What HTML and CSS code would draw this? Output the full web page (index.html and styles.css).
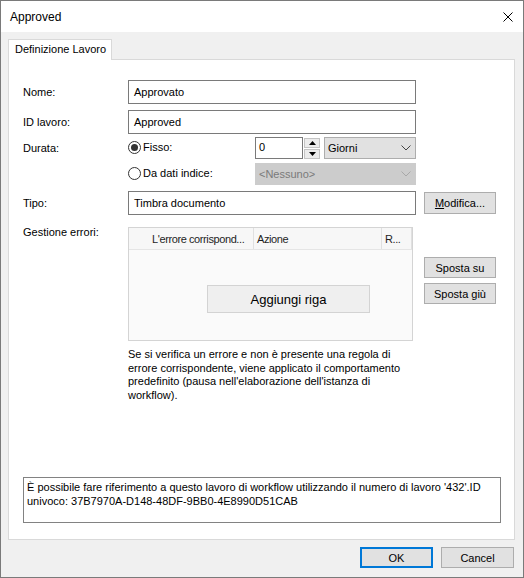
FILE: index.html
```html
<!DOCTYPE html>
<html>
<head>
<meta charset="utf-8">
<link rel="stylesheet" href="styles.css">
</head>
<body>
<div class="window">
  <div class="titlebar">
    <span class="title">Approved</span>
    <svg class="close" width="10" height="10" viewBox="0 0 10 10"><path d="M0.5 0.5 L9.5 9.5 M9.5 0.5 L0.5 9.5" stroke="#000" stroke-width="1" fill="none"/></svg>
  </div>
  <div class="client">
    <div class="tabs"><div class="tab">Definizione Lavoro</div></div>
    <div class="panel">
      <div class="row row-first">
        <div class="label">Nome:</div>
        <div class="input field">Approvato</div>
      </div>
      <div class="row row-gap6">
        <div class="label">ID lavoro:</div>
        <div class="input field">Approved</div>
      </div>
      <div class="row row-durata">
        <div class="label">Durata:</div>
        <div class="radio-group"><span class="radio checked"></span><span>Fisso:</span></div>
        <div class="spin-input">0</div>
        <div class="spin">
          <div class="spin-btn"><svg width="7" height="4" viewBox="0 0 7 4"><path d="M0 4 L3.5 0 L7 4 Z" fill="#000"/></svg></div>
          <div class="spin-btn"><svg width="7" height="4" viewBox="0 0 7 4"><path d="M0 0 L3.5 4 L7 0 Z" fill="#000"/></svg></div>
        </div>
        <div class="combo combo-giorni"><span>Giorni</span><svg width="10" height="6" viewBox="0 0 10 6"><path d="M0.5 0.5 L5 5 L9.5 0.5" stroke="#444" fill="none"/></svg></div>
      </div>
      <div class="row row-dati">
        <div class="label"></div>
        <div class="radio-group"><span class="radio"></span><span>Da dati indice:</span></div>
        <div class="combo combo-disabled"><span>&lt;Nessuno&gt;</span><svg width="10" height="6" viewBox="0 0 10 6"><path d="M0.5 0.5 L5 5 L9.5 0.5" stroke="#a8a8a8" fill="none"/></svg></div>
      </div>
      <div class="row row-gap6">
        <div class="label">Tipo:</div>
        <div class="input field">Timbra documento</div>
        <button class="btn btn-side btn-mod"><u>M</u>odifica...</button>
      </div>
      <div class="row row-errors">
        <div class="label label-top">Gestione errori:</div>
        <div class="list">
          <div class="list-head">
            <div class="col col1">L'errore corrispond...</div>
            <div class="col col2">Azione</div>
            <div class="col col3">R...</div>
          </div>
          <div class="list-body">
            <button class="add-row">Aggiungi riga</button>
          </div>
        </div>
        <div class="side-buttons">
          <button class="btn btn-side">Sposta su</button>
          <button class="btn btn-side">Sposta giù</button>
        </div>
      </div>
      <p class="note">Se si verifica un errore e non è presente una regola di errore corrispondente, viene applicato il comportamento predefinito (pausa nell'elaborazione dell'istanza di workflow).</p>
      <div class="info">È possibile fare riferimento a questo lavoro di workflow utilizzando il numero di lavoro '432'.ID univoco: 37B7970A-D148-48DF-9BB0-4E8990D51CAB</div>
    </div>
    <div class="footer">
      <button class="btn btn-foot btn-default">OK</button>
      <button class="btn btn-foot">Cancel</button>
    </div>
  </div>
</div>
</body>
</html>
```

FILE: styles.css
```css
* { box-sizing: border-box; }
body {
  margin: 0;
  font-family: "Liberation Sans", Arial, sans-serif;
  font-size: 11px;
  color: #000;
}
.window {
  width: 524px;
  height: 578px;
  border: 1px solid #7a7a7a;
  background: #f0f0f0;
  display: flex;
  flex-direction: column;
}
.titlebar {
  height: 31px;
  flex: none;
  background: #fff;
  display: flex;
  align-items: center;
  justify-content: space-between;
  padding: 0 10px 0 9px;
}
.title { font-size: 12px; }
.close { display: block; }
.client {
  flex: 1;
  display: flex;
  flex-direction: column;
  padding: 7px 8px 0 7px;
}
.tabs { display: flex; }
.tab {
  width: 104px;
  height: 21px;
  border: 1px solid #d9d9d9;
  border-bottom: none;
  background: #fff;
  margin-bottom: -1px;
  position: relative;
  z-index: 1;
  padding-left: 6px;
  line-height: 19px;
}
.panel {
  height: 481px;
  border: 1px solid #d9d9d9;
  background: #fff;
  display: flex;
  flex-direction: column;
  padding: 20px 0 16px 14px;
}
.row { display: flex; align-items: center; }
.row-gap6 { margin-top: 6px; }
.row-durata { margin-top: 3px; height: 22px; }
.row-dati { margin-top: 4px; height: 22px; }
.row-errors { margin-top: 12px; align-items: flex-start; }
.label { width: 105px; flex: none; }
.label-top { line-height: 11px; }
.input {
  height: 24px;
  border: 1px solid #7a7a7a;
  padding-left: 5px;
  display: flex;
  align-items: center;
  background: #fff;
}
.field { width: 288px; }
.radio-group {
  width: 127px;
  display: flex;
  align-items: center;
  gap: 2px;
  margin-top: -2px;
}
.radio {
  width: 13px;
  height: 13px;
  border: 1px solid #333;
  border-radius: 50%;
  display: flex;
  align-items: center;
  justify-content: center;
}
.radio.checked::after {
  content: "";
  width: 7px;
  height: 7px;
  border-radius: 50%;
  background: #333;
}
.spin-input {
  width: 48px;
  height: 22px;
  border: 1px solid #7a7a7a;
  padding: 0 0 2px 3px;
  display: flex;
  align-items: center;
}
.spin {
  margin-left: 1px;
  display: flex;
  flex-direction: column;
  gap: 1px;
}
.spin-btn {
  width: 16px;
  height: 10px;
  background: #ececec;
  border: 1px solid #c4c4c4;
  display: flex;
  align-items: center;
  justify-content: center;
}
.spin-btn svg { display: block; }
.combo {
  height: 22px;
  display: flex;
  align-items: center;
  justify-content: space-between;
  padding: 0 4px 0 3px;
  border: 1px solid #adadad;
  background: #e1e1e1;
}
.combo svg { display: block; }
.combo-giorni { width: 92px; margin-left: 4px; }
.combo-disabled {
  width: 161px;
  background: #cccccc;
  border-color: #cccccc;
  color: #7a7a7a;
}
.btn {
  font-family: "Liberation Sans", Arial, sans-serif;
  font-size: 11px;
  color: #000;
  background: #e1e1e1;
  border: 1px solid #adadad;
  padding: 0;
  margin: 0;
}
.btn-side { width: 72px; height: 21px; }
.btn-mod { margin-left: 8px; height: 22px; }
.list {
  width: 285px;
  height: 114px;
  border: 1px solid #d4d4d4;
  background: #fafafa;
  display: flex;
  flex-direction: column;
}
.list-head {
  height: 22px;
  display: flex;
  border-bottom: 1px solid #e5e5e5;
  background: #f7f7f7;
  color: #1e1e1e;
  letter-spacing: -0.4px;
}
.col {
  display: flex;
  align-items: center;
  border-right: 1px solid #e0e0e0;
  white-space: nowrap;
  overflow: hidden;
}
.col1 { width: 125px; padding-left: 23px; }
.col2 { width: 128px; padding-left: 3px; }
.col3 { width: 30px; padding-left: 3px; }
.list-body {
  flex: 1;
  padding: 35px 0 0 78px;
}
.add-row {
  width: 163px;
  height: 28px;
  background: #efefef;
  border: 1px solid #d3d3d3;
  font-family: "Liberation Sans", Arial, sans-serif;
  font-size: 13px;
  color: #000;
  padding: 0;
}
.side-buttons {
  margin-left: 11px;
  padding-top: 30px;
  display: flex;
  flex-direction: column;
  gap: 5px;
}
.note {
  margin: 7px 0 0 105px;
  width: 290px;
  line-height: 13.5px;
}
.info {
  margin-top: auto;
  width: 478px;
  height: 46px;
  border: 1px solid #828282;
  padding: 2px 3px;
  line-height: 14px;
}
.footer {
  margin-top: 7px;
  display: flex;
  justify-content: flex-end;
  gap: 8px;
  padding-right: 1px;
}
.btn-foot { width: 73px; height: 21px; }
.btn-default { border: 2px solid #0078d7; }
```
